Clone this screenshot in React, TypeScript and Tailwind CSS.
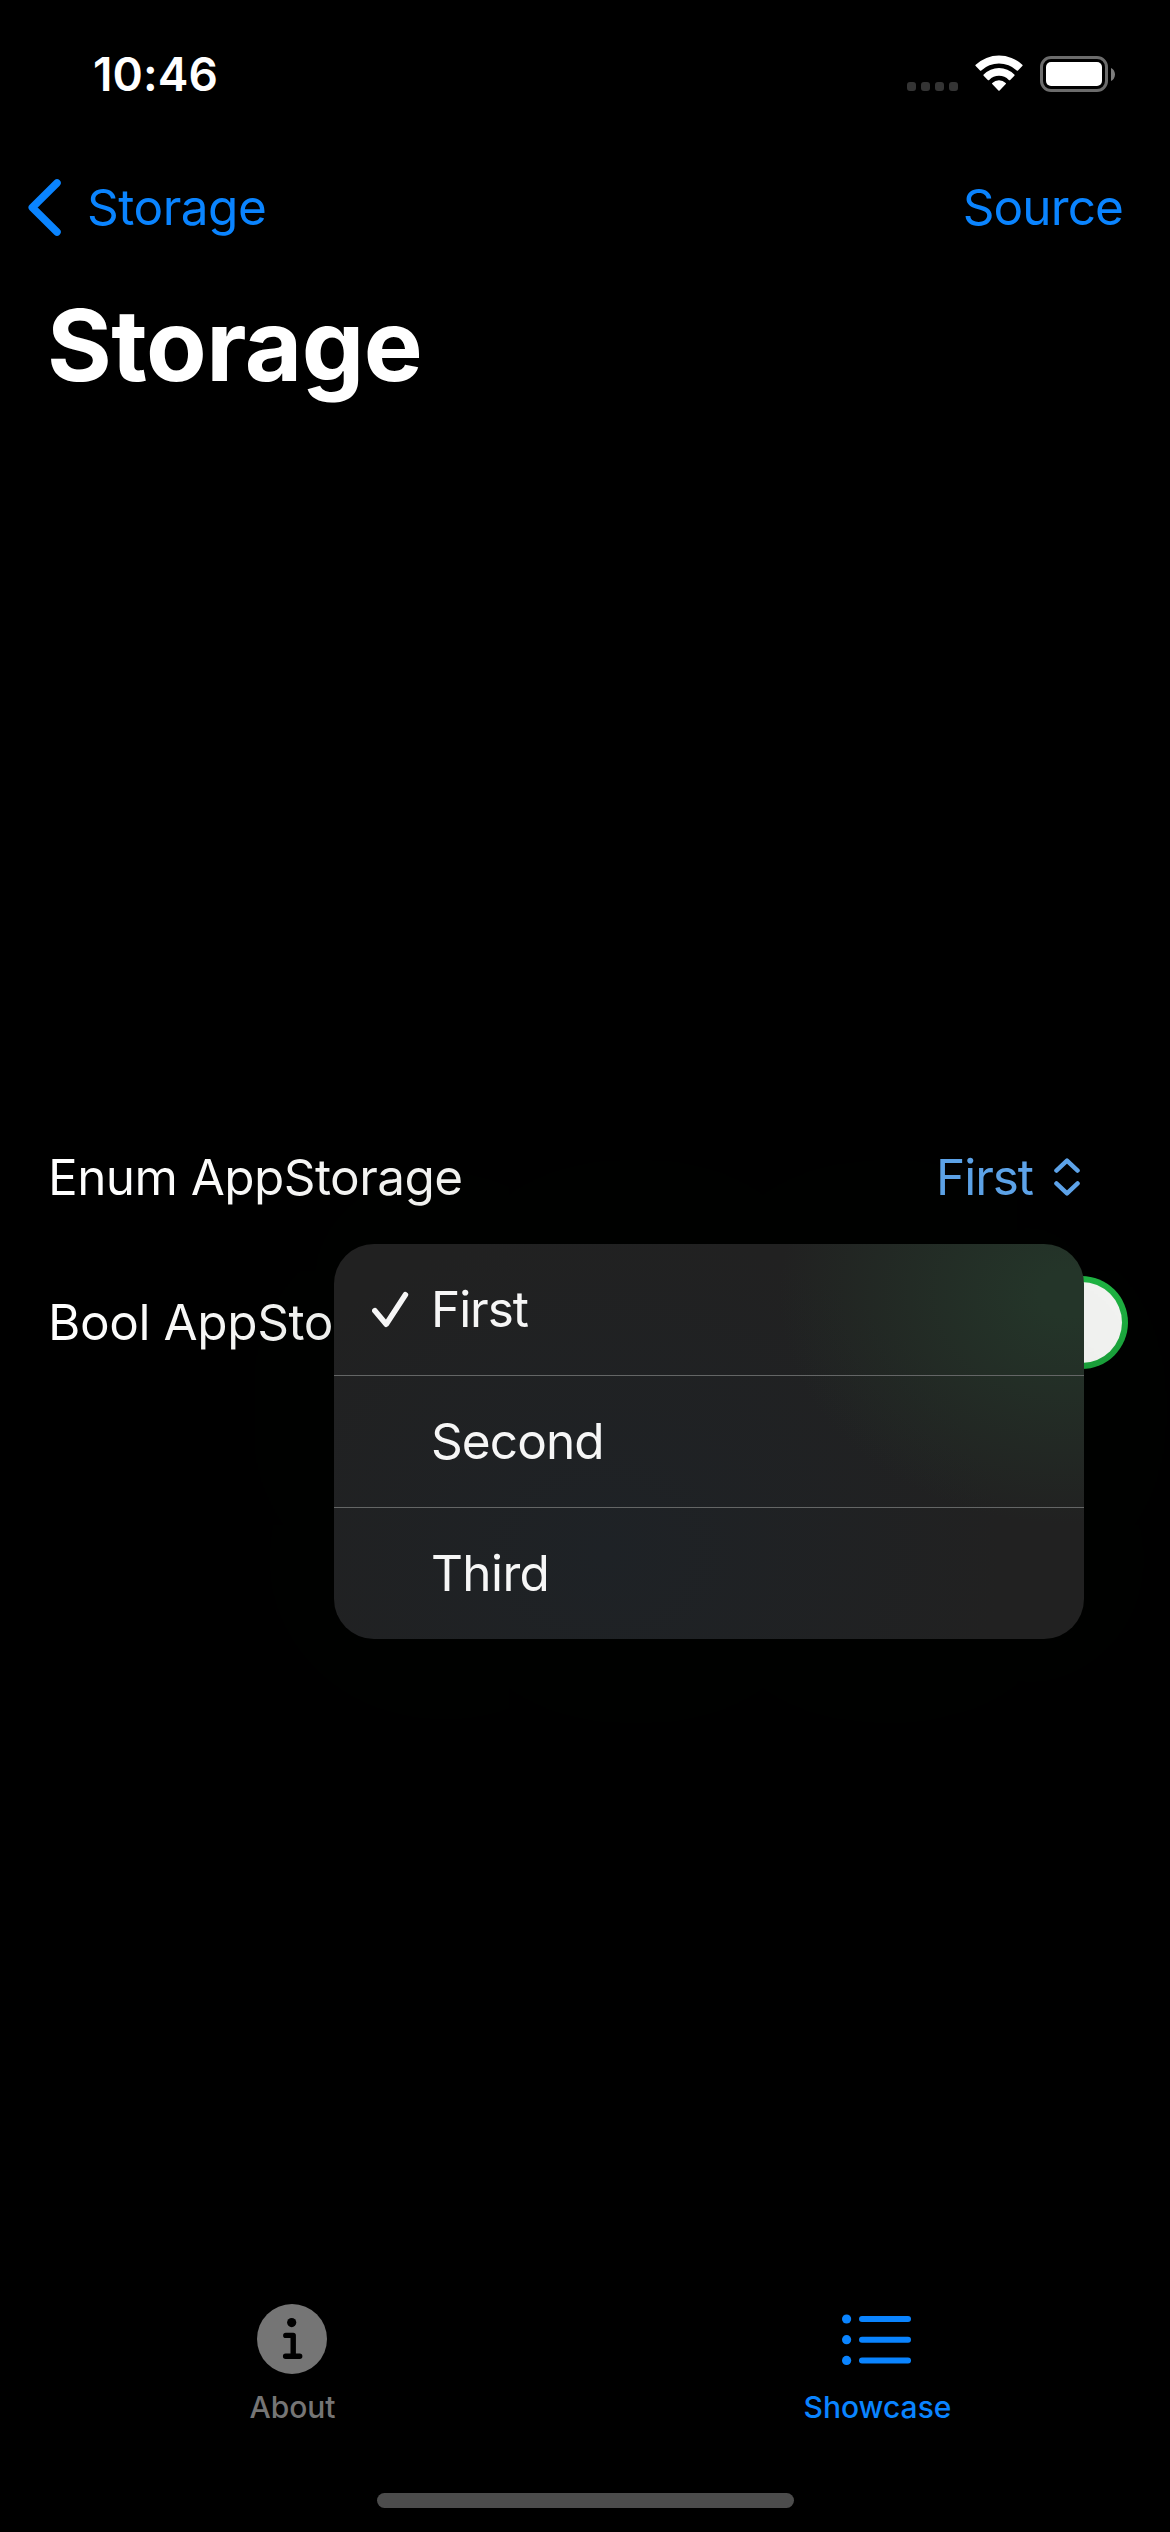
function WifiIcon() {
  return (
    <svg className="h-[38px] w-12" viewBox="0 0 48 38" fill="white">
      <path d="M.7 11.1Q0 10.4.7 9.8A34 34 0 0 1 47.3 9.8Q48 10.4 47.3 11.1L43 15.4Q42.4 16 41.7 15.4A26 26 0 0 0 6.3 15.4Q5.6 16 5 15.4Z" />
      <path d="M8.6 20.8Q8 20.1 8.7 19.5A21.3 21.3 0 0 1 39.3 19.5Q40 20.1 39.4 20.8L35.2 25Q34.5 25.6 33.8 25A13.6 13.6 0 0 0 14.2 25Q13.5 25.6 12.8 25Z" />
      <path d="M17.2 29Q16.7 28.4 17.3 27.9A9.8 9.8 0 0 1 30.7 27.9Q31.3 28.4 30.8 29L24.6 35.4Q24 36 23.4 35.4Z" />
    </svg>
  );
}

function StatusBar() {
  return (
    <header className="flex h-[141px] items-center justify-between pt-[7px] pr-[55px] pl-[93px]">
      <span className="text-[46px] leading-[60px] font-semibold tracking-[0.1px]">10:46</span>
      <div className="flex items-center">
        <div className="mt-[25px] mr-[17px] flex gap-[5px]">
          {[0, 1, 2, 3].map((dot) => (
            <span key={dot} className="size-[9px] rounded-[3px] bg-[#343434]" />
          ))}
        </div>
        <WifiIcon />
        <div className="ml-[17px] flex items-center gap-[3px]">
          <div className="h-9 w-[68px] rounded-[11px] border-3 border-[#6c6c6c] p-[3px]">
            <div className="h-full rounded-[5px] bg-white" />
          </div>
          <svg className="h-[13px] w-1" viewBox="0 0 4 13" fill="#7d7d7d">
            <path d="M0 0C2.4 1 4 3.6 4 6.5S2.4 12 0 13Z" />
          </svg>
        </div>
      </div>
    </header>
  );
}

function NavBar() {
  return (
    <nav className="flex h-[132px] items-center justify-between pr-[47px] pl-7 text-[49.5px] text-[#0a84ff]">
      <button className="flex items-center gap-[26px]">
        <svg className="h-[57px] w-[33px]" viewBox="0 0 33 57" fill="none" stroke="currentColor" strokeWidth="7.5" strokeLinecap="round" strokeLinejoin="round">
          <path d="M29 4 4.3 28.5 29 53" />
        </svg>
        <span className="tracking-[-0.5px]">Storage</span>
      </button>
      <button className="tracking-[-0.9px]">Source</button>
    </nav>
  );
}

function Menu() {
  return (
    <ul className="absolute top-[133px] right-[86px] w-[750px] divide-y divide-[#646666] overflow-hidden rounded-[40px] bg-[#212121] bg-[radial-gradient(ellipse_290px_230px_at_735px_50px,#243529_0%,#243529_10%,#22292400_100%),radial-gradient(ellipse_400px_330px_at_270px_310px,#1e2226_0%,#1e222600_100%)] text-[49.5px] text-[#f6f6f6] shadow-[0_0_300px_100px_rgba(0,20,0,0.08)]">
      <li className="box-content flex h-[131px] items-center pl-[38px]">
        <svg className="mr-[22px] h-[37px] w-[37px]" viewBox="0 0 37 37" fill="none" stroke="currentColor" strokeWidth="5.6" strokeLinecap="round" strokeLinejoin="round">
          <path d="M2.9 19.7 14.2 33.2 33.4 3.8" />
        </svg>
        <span className="tracking-[-1.05px]">First</span>
      </li>
      <li className="box-content flex h-[131px] items-center pl-[97px] tracking-[-0.9px]">Second</li>
      <li className="box-content flex h-[131px] items-center pl-[97px] tracking-[-0.6px]">Third</li>
    </ul>
  );
}

function Settings() {
  return (
    <section className="relative mt-[706px] flex flex-col gap-[13px] text-[49.5px]">
      <div className="flex h-[132px] items-center justify-between pr-[90px] pl-12">
        <span className="bg-linear-to-r from-white to-[#fafaf8] bg-clip-text tracking-[-0.57px] text-transparent">Enum AppStorage</span>
        <div className="flex items-center text-[#60a8f0]">
          <span className="mr-[21px] tracking-[-1.05px]">First</span>
          <svg className="h-[38px] w-[26px]" viewBox="0 0 26 38" fill="none" stroke="currentColor" strokeWidth="4.4" strokeLinecap="round" strokeLinejoin="round">
            <path d="M2.4 12.6 13 2.6 23.6 12.6M2.4 25.4 13 35.4 23.6 25.4" />
          </svg>
        </div>
      </div>
      <div className="flex h-[132px] items-center justify-between pr-[42px] pl-12">
        <span className="bg-linear-to-r from-white to-[#f6f6f4] bg-clip-text tracking-[-0.41px] text-transparent">Bool AppStorage</span>
        <div className="flex h-[93px] w-[153px] justify-end rounded-full bg-linear-to-b from-[#20ba45] to-[#1ba43c] p-1.5">
          <span className="size-[81px] rounded-full bg-[#fbfbfa]" />
        </div>
      </div>
      <Menu />
    </section>
  );
}

function TabBar() {
  return (
    <footer className="flex h-[185px] text-[30px] leading-[40px] font-medium">
      <button className="flex flex-1 flex-col items-center text-[#757575]">
        <svg className="mt-[6px] mr-px mb-[13px] size-[70px]" viewBox="0 0 70 70">
          <circle cx="35" cy="35" r="35" fill="currentColor" />
          <circle cx="34.7" cy="18.6" r="4.6" fill="black" />
          <path d="M28.8 31.4H36.2V52M28.6 52.2H42.7" fill="none" stroke="black" strokeWidth="5.4" strokeLinecap="round" strokeLinejoin="round" />
        </svg>
        About
      </button>
      <button className="flex flex-1 flex-col items-center text-[#0a84ff]">
        <svg className="mt-[6px] mb-[13px] h-[70px] w-[72px]" viewBox="0 0 72 70" fill="currentColor">
          {[15, 35.7, 56.4].map((y) => (
            <g key={y}>
              <circle cx="4.6" cy={y} r="4.6" />
              <rect x="17" y={y - 3} width="52" height="6" rx="3" />
            </g>
          ))}
        </svg>
        Showcase
      </button>
    </footer>
  );
}

export default function App() {
  return (
    <main className="flex h-[2532px] w-[1170px] flex-col overflow-hidden bg-black font-['Inter',sans-serif] text-white">
      <StatusBar />
      <NavBar />
      <h1 className="h-[132px] pl-[47px] text-[99px] leading-[144px] font-bold tracking-[-0.5px]">Storage</h1>
      <Settings />
      <div className="flex-1" />
      <TabBar />
      <div className="flex h-[49px] justify-center">
        <span className="mt-[10px] h-[15px] w-[417px] rounded-full bg-[#4c4c4c]" />
      </div>
    </main>
  );
}
